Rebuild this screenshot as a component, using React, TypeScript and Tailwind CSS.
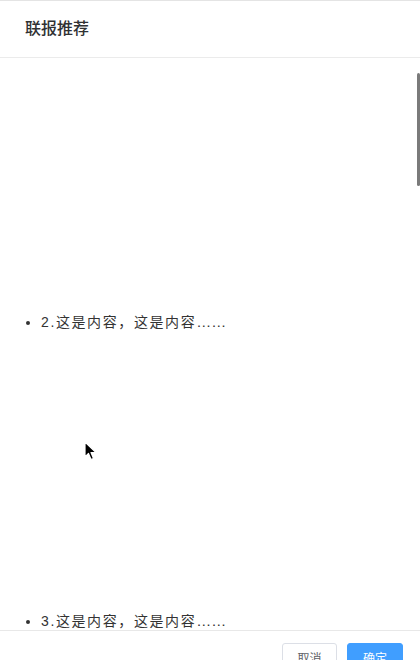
import { useLayoutEffect, useRef } from "react"

const items = ["1.这是内容，这是内容", "2.这是内容，这是内容", "3.这是内容，这是内容", "4.这是内容，这是内容"]

function Cursor() {
  return (
    <svg className="pointer-events-none absolute left-[84px] top-[440px]" width="14" height="20" viewBox="0 0 14 20">
      <path d="M1 1 L1 16 L4.5 12.5 L7 18.5 L9.5 17.5 L7 11.5 L12 11.5 Z" fill="#000" stroke="#fff" strokeWidth="1.2" strokeLinejoin="round" />
    </svg>
  )
}

export default function App() {
  const bodyRef = useRef<HTMLDivElement>(null)

  useLayoutEffect(() => {
    if (bodyRef.current) bodyRef.current.scrollTop = 46
  }, [])

  return (
    <div
      className="relative flex h-[660px] w-[420px] flex-col overflow-hidden border-t border-[#e4e4e4] bg-white text-[#333]"
      style={{ fontFamily: '"Liberation Sans", "Noto Sans CJK SC", sans-serif' }}
    >
      <div className="flex h-[57px] shrink-0 items-center border-b border-[#ebebeb] px-[25px]">
        <h3 className="text-[16px] font-medium text-[#303133]">联报推荐</h3>
      </div>

      <div className="relative min-h-0 flex-1">
        <div ref={bodyRef} className="h-full overflow-y-auto [scrollbar-width:none]">
          <ul className="list-disc pl-[41px] text-[14px] leading-[21px] tracking-[1.6px] text-[#333]">
            {items.map((t) => (
              <li key={t} className="h-[299px]">
                {t}
                <span className="text-[15px] tracking-normal">……</span>
              </li>
            ))}
          </ul>
        </div>
        <div className="absolute right-0 top-[15px] h-[113px] w-[3px] rounded-full bg-[#7a7a7a]" />
      </div>

      <div className="flex h-[30px] shrink-0 justify-end gap-[10px] border-t border-[#e8e8e8] pr-[17px] pt-[12px]">
        <button className="h-8 w-[55px] shrink-0 rounded-[3px] border border-[#dcdfe6] bg-white text-[12px] text-[#606266]">
          取消
        </button>
        <button className="h-8 w-[56px] shrink-0 rounded-[3px] border border-[#409eff] bg-[#409eff] text-[12px] text-white">
          确定
        </button>
      </div>

      <Cursor />
    </div>
  )
}
